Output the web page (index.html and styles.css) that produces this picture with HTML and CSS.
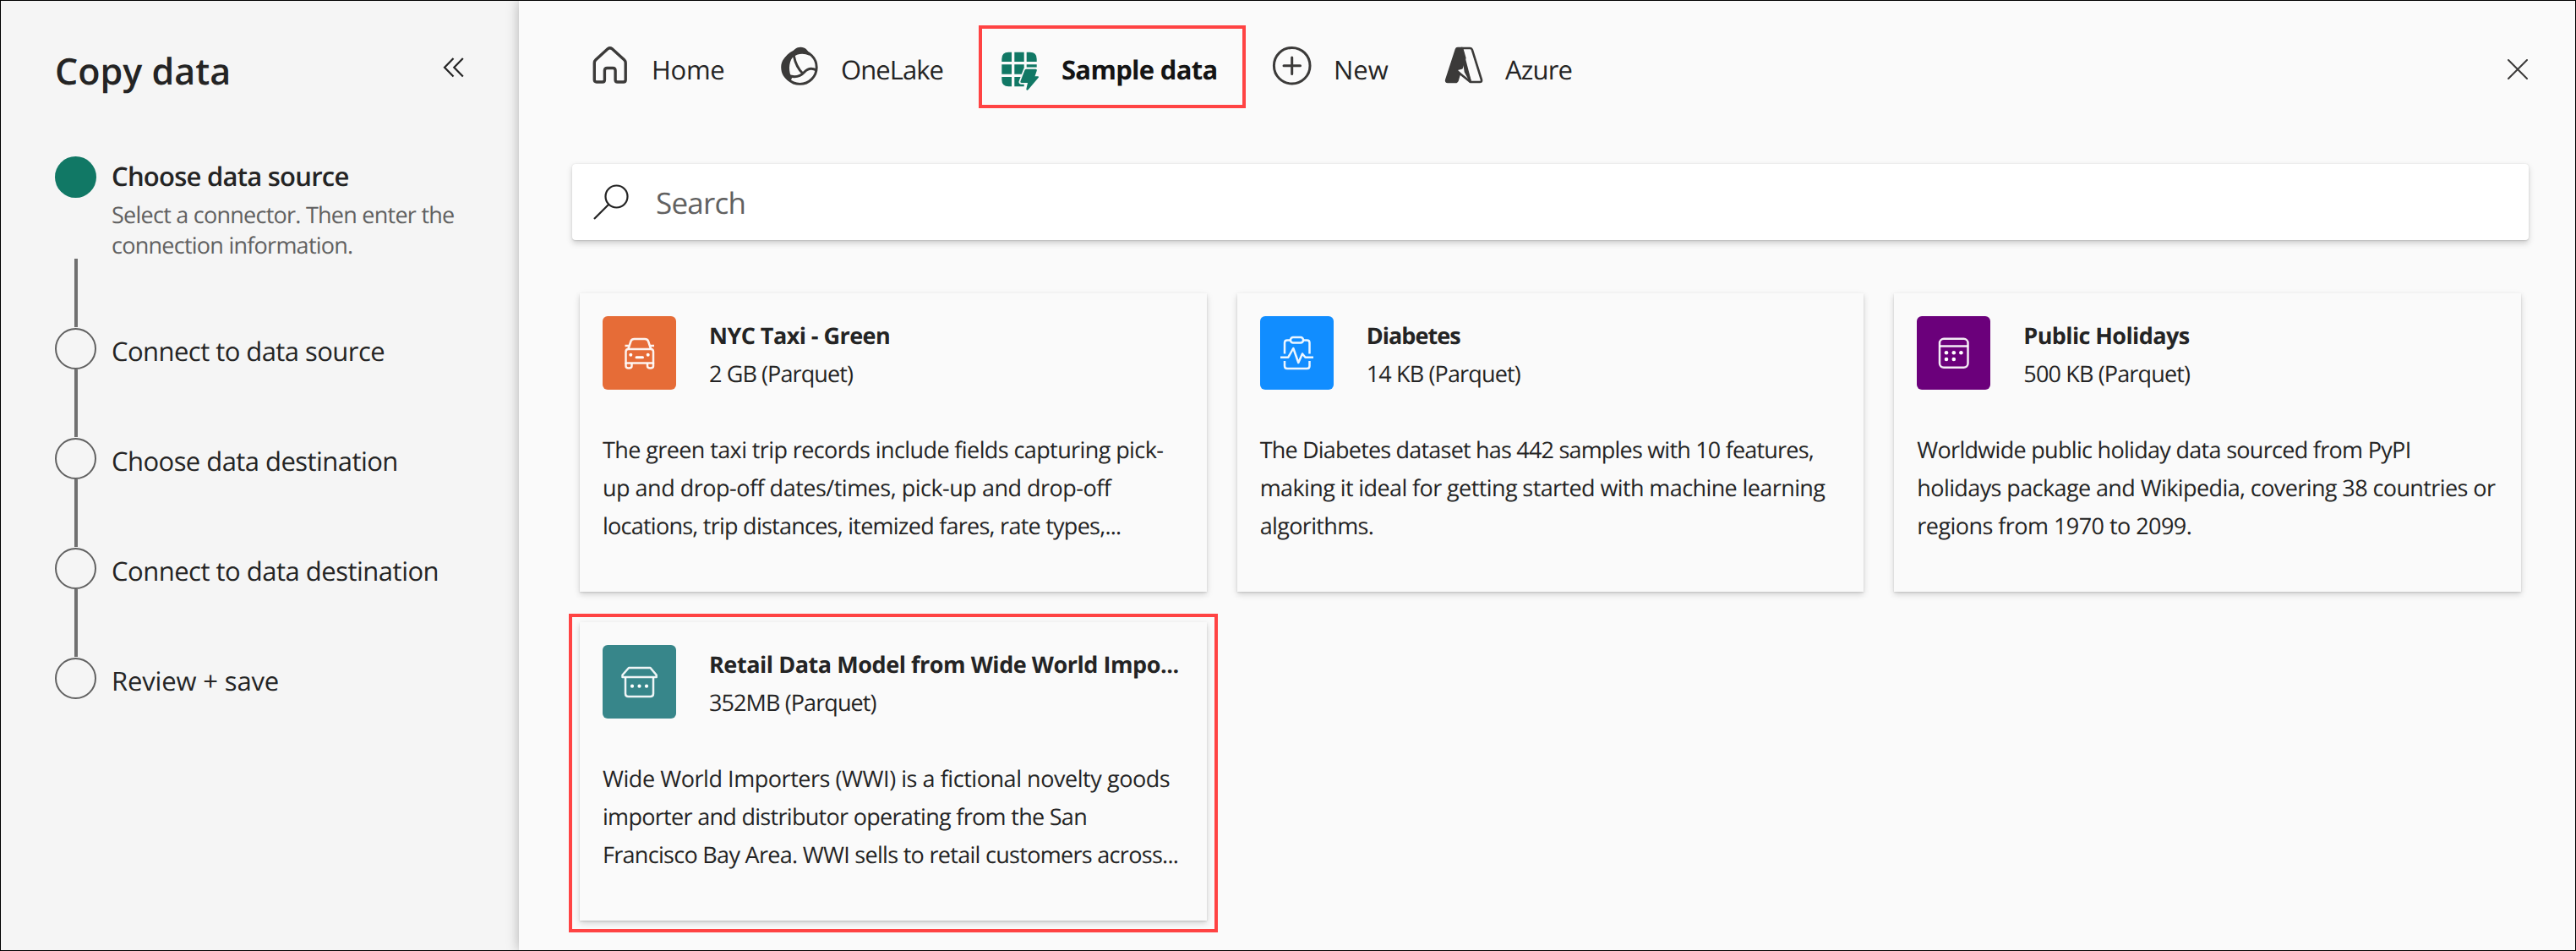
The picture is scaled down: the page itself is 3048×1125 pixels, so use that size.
FILE: index.html
```html
<!DOCTYPE html>
<html lang="en">
<head>
<meta charset="utf-8">
<title>Copy data</title>
<link rel="stylesheet" href="styles.css">
</head>
<body>
<div class="wizard">
  <aside class="sidebar">
    <header class="sidebar-head">
      <h1 class="title">Copy data</h1>
      <button class="icon-button collapse" aria-label="Collapse">
        <svg width="26" height="26" viewBox="0 0 26 26" fill="none" stroke="#242424" stroke-width="2.2"><path d="M12.5 2 2 12.8 12.5 23.6M23.8 2 13.3 12.8 23.8 23.6"/></svg>
      </button>
    </header>
    <ol class="steps">
      <li class="step step-active">
        <div class="rail"><span class="dot"></span><span class="line"></span></div>
        <div class="step-body">
          <div class="step-name k75">Choose data source</div>
          <p class="step-note k75">Select a connector. Then enter the<br>connection information.</p>
        </div>
      </li>
      <li class="step">
        <div class="rail"><span class="dot"></span><span class="line"></span></div>
        <div class="step-body"><div class="step-name k55">Connect to data source</div></div>
      </li>
      <li class="step">
        <div class="rail"><span class="dot"></span><span class="line"></span></div>
        <div class="step-body"><div class="step-name k55">Choose data destination</div></div>
      </li>
      <li class="step">
        <div class="rail"><span class="dot"></span><span class="line"></span></div>
        <div class="step-body"><div class="step-name k50">Connect to data destination</div></div>
      </li>
      <li class="step">
        <div class="rail"><span class="dot"></span></div>
        <div class="step-body"><div class="step-name k15">Review + save</div></div>
      </li>
    </ol>
  </aside>

  <main class="main">
    <nav class="tabs">
      <a class="tab tab-home">
        <svg class="tab-icon" viewBox="0 0 48 48" fill="none" stroke="#3b3a39" stroke-width="3.4" stroke-linejoin="round"><path d="M5.3 20.4q0-2.2 1.6-3.7L21.4 3.6q2.3-1.9 4.6 0L40.6 16.7q1.6 1.5 1.6 3.7V40.5q0 2.5-2.5 2.5H32.600q-2.500 0-2.500-2.500V29.500q0-3-3-3H20.400q-3 0-3 3V40.500q0 2.500-2.500 2.500H7.800q-2.500 0-2.500-2.500Z"/></svg>
        <span class="tab-label k30">Home</span>
      </a>
      <a class="tab tab-onelake">
        <svg class="tab-icon" viewBox="0 0 48 48">
          <g fill="none" stroke="#3b3a39" stroke-width="2.900"><circle cx="24.500" cy="25.700" r="19.700"/><path d="M17.300 12C19 21 23 28.500 28.300 33.500"/><path d="M11 35.500C19 38 25.500 36 29.500 31.500 33.500 27 38.500 26 44 29"/></g>
          <path fill="#3b3a39" d="M13.800 10.500C16.500 4.500 20.500 1.700 25.200 1.700 31 1.700 34.800 5.500 35.800 11.800 29 8.500 21.500 9 15.800 14 10.800 20.500 11 31 15 38.500L13 42.800C6 39.500 2.200 33 2.200 25.500 2.200 18 6.800 11.800 13.800 10.500Z"/>
        </svg>
        <span class="tab-label k95">OneLake</span>
      </a>
      <a class="tab tab-sample">
        <svg class="tab-icon" viewBox="0 0 48 48" fill="#117865">
          <path d="M14 1.700V13H2.300V9.700q0-8 8-8ZM17.300 1.700H28.700V13H17.300ZM31.700 1.700H35.700q8 0 8 8V13H31.700ZM2.300 16.300H14V27.700H2.300ZM17.300 16.300H28.700V27.700H17.300ZM31.700 16.300H43.700V19.500H31.700ZM2.300 31H14V42.300H10.300q-8 0-8-8ZM17.300 31H28.700V42.300H17.300Z"/>
          <path stroke="#fafafa" stroke-width="3.500" stroke-linejoin="round" paint-order="stroke" d="M31 21.700H42.500q1.800 0 1.300 1.700L41.500 30.300H45q1.800 0 .8 1.500L33.700 46Q32 47.600 31.300 45.500L33 38H25.700q-1.900 0-1.300-1.700L29.700 22.500Z"/>
        </svg>
        <span class="tab-label k70">Sample data</span>
      </a>
      <a class="tab tab-new">
        <svg class="tab-icon" viewBox="0 0 48 48" fill="none" stroke="#3b3a39" stroke-width="3" stroke-linecap="round"><circle cx="23.700" cy="23.700" r="21.300"/><path d="M23.700 14V33.500M14 23.700H33.500"/></svg>
        <span class="tab-label">New</span>
      </a>
      <a class="tab tab-azure">
        <svg class="tab-icon" viewBox="0 0 48 48" stroke="#3b3a39" stroke-width="2.600" stroke-linejoin="round">
          <path fill="#fafafa" d="M21.500 3H31.500Q33.300 3 33.900 4.800L45 40.500Q45.500 43 43 43H31.800Z"/>
          <path fill="#3b3a39" d="M16.800 3H22L25.300 14.500 21.500 26.500 14.500 28.300 19 33 16.800 40.500Q16 43 14 43H5Q2.500 43 3.300 40.500L15 4.500Q15.500 3 16.800 3Z"/>
          <path fill="none" d="M14.500 29 31.800 43"/>
          <path fill="#3b3a39" d="M24.500 21 31.300 41 26 31Z"/>
        </svg>
        <span class="tab-label k80">Azure</span>
      </a>
      <button class="icon-button close" aria-label="Close">
        <svg width="24" height="24" viewBox="0 0 24 24" fill="none" stroke="#3b3a39" stroke-width="2" stroke-linecap="round"><path d="M1 1 23 23M23 1 1 23"/></svg>
      </button>
    </nav>

    <div class="search">
      <svg class="search-icon" width="42" height="42" viewBox="0 0 42 42" fill="none" stroke="#242424" stroke-width="2.200"><circle cx="27.500" cy="14.500" r="13"/><path d="M18.300 23.700 1 41"/></svg>
      <span class="search-text k75">Search</span>
    </div>

    <section class="cards">
      <article class="card">
        <header class="card-head">
          <svg class="card-icon" viewBox="0 0 87 87"><rect width="87" height="87" rx="6" fill="#e66c37"/>
            <g fill="none" stroke="#fff" stroke-width="2.500" stroke-linejoin="round" stroke-opacity=".92"><path d="M30.500 38.500 33.500 29.500Q34.500 27 37.500 27H50Q53 27 54 29.500L57 38.500M26.500 35H31M56.500 35H61"/><path d="M27.500 55.500V42Q27.500 39 30.500 39H57Q60 39 60 42V55.500Z"/><path d="M27.500 55V59Q27.500 61.500 31 61.500 34.500 61.500 34.500 59V56M53 56V59Q53 61.500 56.500 61.500 60 61.500 60 59V55"/></g>
            <g fill="#fff"><circle cx="33.300" cy="45.700" r="2"/><circle cx="53.700" cy="45.700" r="2"/><rect x="38.500" y="47.300" width="10.500" height="3" rx="1.500"/></g></svg>
          <div class="card-titles"><h2 class="card-title k55">NYC Taxi - Green</h2><div class="card-size k90">2 GB (Parquet)</div></div>
        </header>
        <p class="card-text"><span class="k60">The green taxi trip records include fields capturing pick-</span><span class="k50">up and drop-off dates/times, pick-up and drop-off</span><span class="k75">locations, trip distances, itemized fares, rate types,...</span></p>
      </article>

      <article class="card">
        <header class="card-head">
          <svg class="card-icon" viewBox="0 0 87 87"><rect width="87" height="87" rx="6" fill="#118dff"/>
            <g fill="none" stroke="#fff" stroke-width="2.500" stroke-linejoin="round" stroke-opacity=".92"><path d="M29 44.500V31.500Q29 28.500 32 28.500H35.500M51.500 28.500H55.500Q58.500 28.500 58.500 31.500V44.500M29 53V59Q29 62 32 62H55.500Q58.500 62 58.500 59V53"/><rect x="36" y="25" width="15" height="6.500" rx="3"/><path d="M24 48.700H33.300L39.300 38 45.300 55 50 44.500 53.500 48.700H63"/></g></svg>
          <div class="card-titles"><h2 class="card-title k95">Diabetes</h2><div class="card-size k85">14 KB (Parquet)</div></div>
        </header>
        <p class="card-text"><span class="k80">The Diabetes dataset has 442 samples with 10 features,</span><span class="k60">making it ideal for getting started with machine learning</span><span class="k65">algorithms.</span></p>
      </article>

      <article class="card">
        <header class="card-head">
          <svg class="card-icon" viewBox="0 0 87 87"><rect width="87" height="87" rx="6" fill="#6b007b"/>
            <g fill="none" stroke="#fff" stroke-width="2.500" stroke-opacity=".92"><rect x="27" y="26.800" width="33.500" height="34" rx="5"/><path d="M27 35.500H60.500"/></g>
            <g fill="#fff"><circle cx="35" cy="43.300" r="2.300"/><circle cx="43.800" cy="43.300" r="2.300"/><circle cx="52.400" cy="43.300" r="2.300"/><circle cx="35" cy="51" r="2.300"/><circle cx="43.800" cy="51" r="2.300"/></g></svg>
          <div class="card-titles"><h2 class="card-title k60">Public Holidays</h2><div class="card-size k85">500 KB (Parquet)</div></div>
        </header>
        <p class="card-text"><span class="k70">Worldwide public holiday data sourced from PyPI</span><span class="k60">holidays package and Wikipedia, covering 38 countries or</span><span class="k55">regions from 1970 to 2099.</span></p>
      </article>

      <article class="card card-highlight">
        <header class="card-head">
          <svg class="card-icon" viewBox="0 0 87 87"><rect width="87" height="87" rx="6" fill="#37868a"/>
            <g fill="none" stroke="#fff" stroke-width="2.500" stroke-linejoin="round" stroke-opacity=".92"><path d="M31 27H56.500L63.700 35.500V38H23.500V35.500Z"/><path d="M27 38V57.500Q27 61 30.500 61H56.500Q60 61 60 57.500V38"/></g>
            <g fill="#fff"><circle cx="35" cy="48.700" r="2.100"/><circle cx="43.500" cy="48.700" r="2.100"/><circle cx="52" cy="48.700" r="2.100"/></g></svg>
          <div class="card-titles"><h2 class="card-title k45">Retail Data Model from Wide World Impo...</h2><div class="card-size k90">352MB (Parquet)</div></div>
        </header>
        <p class="card-text"><span class="k45">Wide World Importers (WWI) is a fictional novelty goods</span><span class="k70">importer and distributor operating from the San</span><span class="k70">Francisco Bay Area. WWI sells to retail customers across...</span></p>
      </article>
    </section>
  </main>
</div>
</body>
</html>
```
FILE: styles.css
```css
* { box-sizing: border-box; }

body {
  margin: 0;
  font-family: "Open Sans", "Noto Sans", sans-serif;
  color: #242424;
  text-rendering: geometricPrecision;
}

h1, h2, p, ol { margin: 0; padding: 0; }

.wizard {
  display: flex;
  width: 3048px;
  height: 1125px;
  overflow: hidden;
  border: 1px solid #000;
  background: #fafafa;
}

.icon-button { display: block; padding: 0; border: 0; background: none; }
.icon-button svg { display: block; }

/* Sidebar */
.sidebar {
  flex: none;
  width: 613px;
  padding: 53px 64px 0;
  background: #f5f5f5;
}

.sidebar-head { display: flex; align-items: flex-start; justify-content: space-between; height: 131px; }
.title { padding-top: 1px; font-size: 43px; font-weight: 600; line-height: 58px; }
.collapse { margin: 13px 0 0; }

.steps { list-style: none; }
.step { display: flex; gap: 18px; height: 130px; }
.step-active { height: 203px; }
.rail { display: flex; flex-direction: column; align-items: center; width: 49px; }
.dot { width: 49px; height: 49px; border: 2px solid #616161; border-radius: 50%; }
.line { width: 4px; height: 80px; margin: auto 0 1px 1px; background: #707070; }
.step-active .line { height: 81px; }
.step-active .dot { border: 0; background: #117865; }
.step-body { padding-top: 7px; white-space: nowrap; }
.step-active .step-body { padding-top: 3px; }
.step-name { font-size: 31px; line-height: 42px; }
.step-active .step-name { font-weight: 600; }
.step-note { margin-top: 6px; font-size: 27px; line-height: 36px; color: #616161; }

/* Main panel */
.main {
  position: relative;
  flex: 1;
  padding: 29px 55px 0 63px;
  background: #fafafa;
  box-shadow: 0 0 14px rgba(0, 0, 0, .28);
}

.tabs { display: flex; height: 98px; padding-left: 21px; }
.tab { display: flex; align-items: flex-start; gap: 25px; padding-top: 24px; white-space: nowrap; }
.tab-icon { flex: none; width: 48px; height: 48px; }
.tab-label { margin-top: 8px; font-size: 31px; line-height: 42px; }
.tab-home { width: 224px; }
.tab-onelake { width: 236px; }
.tab-sample { width: 316px; margin-right: 31px; padding: 26px 0 0 21px; border: 4px solid #ff4343; }
.tab-sample .tab-label { margin-top: 2px; font-weight: 700; color: #141414; }
.tab-new { width: 203px; }
.close { margin: 40px 1px 0 auto; height: 24px; }

.search {
  display: flex;
  align-items: center;
  height: 90px;
  margin-top: 66px;
  padding-left: 25px;
  gap: 32px;
  border-radius: 4px;
  background: #fff;
  box-shadow: 0 3.2px 7.2px rgba(0, 0, 0, .17), 0 .6px 1.8px rgba(0, 0, 0, .12);
}
.search-text { padding-top: 3px; font-size: 35px; line-height: 48px; color: #616161; }

.cards {
  display: grid;
  grid-template-columns: repeat(3, 1fr);
  grid-auto-rows: 353px;
  gap: 36px;
  margin: 63px 9px 0;
}

.card {
  position: relative;
  min-width: 0;
  padding: 27px 27px 0;
  white-space: nowrap;
  background: #fafafa;
  box-shadow: 0 3.2px 7.2px rgba(0, 0, 0, .17), 0 .6px 1.8px rgba(0, 0, 0, .12);
}
.card-head { display: flex; gap: 39px; height: 90px; }
.card-icon { width: 87px; height: 87px; }
.card-title, .card-size { font-size: 27px; line-height: 45px; }
.card-title { font-weight: 700; }
.card-text { margin-top: 45px; font-size: 27px; line-height: 45px; }
.card-text span { display: block; }

.card-highlight::after {
  content: "";
  position: absolute;
  inset: -10px -13px -14px;
  border: 4px solid #ff4343;
}

/* Tracking */
.k15 { letter-spacing: -.15px; }
.k30 { letter-spacing: -.3px; }
.k45 { letter-spacing: -.45px; }
.k50 { letter-spacing: -.5px; }
.k55 { letter-spacing: -.55px; }
.k60 { letter-spacing: -.6px; }
.k65 { letter-spacing: -.65px; }
.k70 { letter-spacing: -.7px; }
.k75 { letter-spacing: -.75px; }
.k80 { letter-spacing: -.8px; }
.k85 { letter-spacing: -.85px; }
.k90 { letter-spacing: -.9px; }
.k95 { letter-spacing: -.95px; }
```
